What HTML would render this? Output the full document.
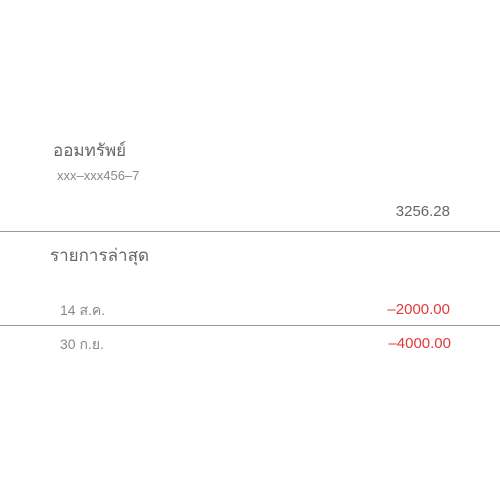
<!DOCTYPE html>
<html><head><meta charset="utf-8"><style>
body{margin:0;width:500px;height:500px;background:#fff;position:relative;overflow:hidden;font-family:"Liberation Sans","Noto Sans CJK SC",sans-serif;}
div{position:absolute;white-space:nowrap;line-height:1;}
.l{left:0;width:500px;height:1px;background:#9a9a9a;}
.r{right:50px;text-align:right;}
</style></head><body>
<div style="left:53px;top:142px;font-size:17px;color:#666;font-weight:300">ออมทรัพย์</div>
<div style="left:57px;top:169px;font-size:13px;color:#888">xxx–xxx456–7</div>
<div class="r" style="top:204px;font-size:15px;color:#666">3256.28</div>
<div class="l" style="top:231px"></div>
<div style="left:50px;top:247px;font-size:17px;color:#666;font-weight:300">รายการล่าสุด</div>
<div style="left:60px;top:303px;font-size:14px;color:#888">14 ส.ค.</div>
<div class="r" style="top:302px;font-size:15px;color:#e03a3a">–2000.00</div>
<div class="l" style="top:325px"></div>
<div style="left:60px;top:337px;font-size:14px;color:#888">30 ก.ย.</div>
<div class="r" style="top:336px;font-size:15px;color:#e03a3a;right:49px">–4000.00</div>
</body></html>
